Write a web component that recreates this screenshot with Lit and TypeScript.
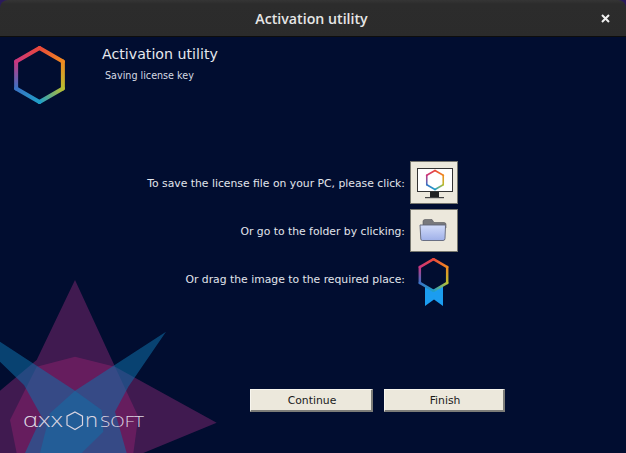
import { LitElement, html, css, svg } from "lit";
import { customElement } from "lit/decorators.js";

const hexPts = (cx: number, cy: number, r: number) =>
  [-90, -30, 30, 90, 150, 210].map((a) => [
    +(cx + r * Math.cos((a * Math.PI) / 180)).toFixed(2),
    +(cy + r * Math.sin((a * Math.PI) / 180)).toFixed(2),
  ]);

const hexColors = ["#e9483a", "#f08a20", "#b9bd30", "#1f9fc8", "#3a72c4", "#c9367f"];

function rainbowHex(id: string, cx: number, cy: number, r: number, sw: number) {
  const p = hexPts(cx, cy, r);
  return p.map((a, i) => {
    const b = p[(i + 1) % 6];
    const gid = `${id}${i}`;
    return svg`<linearGradient id=${gid} gradientUnits="userSpaceOnUse" x1=${a[0]} y1=${a[1]} x2=${b[0]} y2=${b[1]}>
        <stop offset="0" stop-color=${hexColors[i]}></stop>
        <stop offset="1" stop-color=${hexColors[(i + 1) % 6]}></stop>
      </linearGradient>
      <line x1=${a[0]} y1=${a[1]} x2=${b[0]} y2=${b[1]} stroke=${`url(#${gid})`} stroke-width=${sw} stroke-linecap="round"></line>`;
  });
}

@customElement("app-root")
export class AppRoot extends LitElement {
  static styles = css`
    :host {
      display: block;
      width: 626px;
      height: 453px;
      background: #2a1a5a;
      font-family: "DejaVu Sans", sans-serif;
      overflow: hidden;
    }
    .window {
      width: 626px;
      height: 453px;
      display: flex;
      flex-direction: column;
      border-radius: 8px 8px 0 0;
      overflow: hidden;
    }
    .titlebar {
      height: 37px;
      box-sizing: border-box;
      flex: none;
      background: linear-gradient(#353535, #2c2c2c 4px, #2b2b2b);
      border-bottom: 1px solid #0d0d0d;
      display: grid;
      grid-template-columns: 1fr auto 1fr;
      align-items: center;
      color: #e6e6e6;
      font-family: "Open Sans", sans-serif;
      font-weight: 600;
      font-size: 14.2px;
    }
    .title { grid-column: 2; margin-left: -3px; }
    .close {
      justify-self: end;
      margin-right: 16px;
      width: 9px;
      height: 9px;
      display: block;
    }
    .body {
      flex: 1;
      position: relative;
      background: #010d30;
      color: #e2e5ec;
      overflow: hidden;
    }
    .decor { position: absolute; left: 0; bottom: 0; width: 230px; height: 183px; }
    .wm-sm { font: 300 14px "Open Sans", sans-serif; fill: #dcd6e2; }
    .wm-lg { font: 300 20px "Open Sans", sans-serif; fill: #dcd6e2; }
    .head {
      display: flex;
      padding: 8px 0 0 12px;
      height: 79px;
      box-sizing: border-box;
    }
    .logo { width: 55px; height: 62px; flex: none; }
    .headtext { margin-left: 35px; padding-top: 1px; }
    .h1 { font-size: 14.2px; line-height: 17px; color: #e6e8ee; }
    .h2 { font-size: 9.6px; line-height: 12px; margin: 7px 0 0 3px; color: #d6d9e2; }
    .rows {
      position: relative;
      margin-top: 43px;
      display: grid;
      grid-template-columns: 405px 48px;
      column-gap: 5px;
      grid-auto-rows: 48px;
      font-size: 10.8px;
    }
    .rows .t { text-align: right; align-self: center; line-height: 14px; padding-top: 2px; }
    .tile {
      width: 48px;
      height: 43px;
      box-sizing: border-box;
      background: #ece8dc;
      border: 1px solid #77776f;
      display: flex;
      align-items: center;
      justify-content: center;
      align-self: start;
      margin-top: 2px;
    }
    .badge { width: 48px; height: 48px; display: block; margin-top: 3px; }
    .buttons {
      position: relative;
      display: flex;
      margin-top: 86px;
      padding-left: 250px;
      gap: 11px;
    }
    button {
      height: 23px;
      padding: 0 0 0 2px;
      font: 10.8px "DejaVu Sans", sans-serif;
      color: #1a1a1a;
      background: #ece8dc;
      border: 0;
      border-top: 1px solid #f8f6ef;
      border-left: 1px solid #f8f6ef;
      border-right: 2px solid #7c7c78;
      border-bottom: 2px solid #7c7c78;
      box-sizing: border-box;
    }
    .b1 { width: 123px; }
    .b2 { width: 121px; }
  `;

  render() {
    return html`<div class="window">
      <div class="titlebar">
        <span class="title">Activation utility</span>
        <svg class="close" viewBox="0 0 9 9"><path d="M1 1l7 7M8 1l-7 7" stroke="#f0f0f0" stroke-width="2"></path></svg>
      </div>
      <div class="body">
        <svg class="decor" viewBox="0 0 690 549">
          <polygon points="225,30 345,290 650,458 430,549 0,549 0,362 110,270" fill="#8e2a78" fill-opacity="0.45"></polygon>
          <polygon points="225,260 345,290 415,440 400,549 50,549 30,450 110,290" fill="#a82478" fill-opacity="0.36"></polygon>
          <polygon points="0,215 225,362 498,185 385,350 345,425 380,549 75,549 125,440 72,345 0,275" fill="#0f6fa8" fill-opacity="0.55"></polygon>
          <polygon points="225,362 305,420 310,485 245,549 120,549 150,430" fill="#0f6fa8" fill-opacity="0.5"></polygon>
          <g transform="scale(3) translate(0,-270)">
            <text class="wm-lg" x="23" y="426.500" textLength="40" lengthAdjust="spacingAndGlyphs">αxx</text>
            <polygon points="75,412 82.500,416.200 82.500,425 75,429.500 67,425 67,416.200" fill="none" stroke="#dcd6e2" stroke-width="1.200"></polygon>
            <text class="wm-lg" x="85" y="426.500" textLength="13" lengthAdjust="spacingAndGlyphs">n</text>
            <text class="wm-sm" x="100" y="426.500" textLength="44" lengthAdjust="spacingAndGlyphs">SOFT</text>
          </g>
        </svg>
        <div class="head">
          <svg class="logo" viewBox="0 0 55 62">${rainbowHex("a", 27.5, 30, 27, 4)}</svg>
          <div class="headtext">
            <div class="h1">Activation utility</div>
            <div class="h2">Saving license key</div>
          </div>
        </div>
        <div class="rows">
          <div class="t">To save the license file on your PC, please click:</div>
          <div class="tile">
            <svg width="40" height="36" viewBox="0 0 40 36">
              <rect x="3.500" y="3.500" width="35" height="23" fill="#fff" stroke="#333" stroke-width="1"></rect>
              ${rainbowHex("m", 21, 15, 9.5, 1.6)}
              <rect x="16" y="27" width="9" height="5" fill="#222"></rect>
              <rect x="11" y="32" width="19" height="1.200" fill="#444"></rect>
            </svg>
          </div>
          <div class="t">Or go to the folder by clicking:</div>
          <div class="tile">
            <svg width="30" height="26" viewBox="0 0 30 26">
              <defs>
                <linearGradient id="fold" x1="0" y1="0" x2="0" y2="1">
                  <stop offset="0" stop-color="#d2dcfa"></stop>
                  <stop offset="1" stop-color="#9fb0e8"></stop>
                </linearGradient>
              </defs>
              <path d="M4 3.500q0-2 2-2h7l2 3h10q2 0 2 2V10H4z" fill="#77787c" stroke="#55565a" stroke-width=".6"></path>
              <path d="M1 7h24.500q1 0 1 1L26 20.500q0 2-2 2H3.500q-1.500 0-1.700-1.500z" fill="url(#fold)" stroke="#5f6478" stroke-width=".9"></path>
            </svg>
          </div>
          <div class="t">Or drag the image to the required place:</div>
          <svg class="badge" viewBox="0 0 48 48">
            <path d="M15 27V48l9-6.500L33 48V27z" fill="#1b9df0"></path>
            <polygon points="23.500,1 37.500,9 37.500,25 23.500,33 9.500,25 9.500,9" fill="#010d30"></polygon>
            ${rainbowHex("b", 23.5, 17, 15.8, 2.5)}
          </svg>
        </div>
        <div class="buttons">
          <button class="b1">Continue</button>
          <button class="b2">Finish</button>
        </div>
      </div>
    </div>`;
  }
}
